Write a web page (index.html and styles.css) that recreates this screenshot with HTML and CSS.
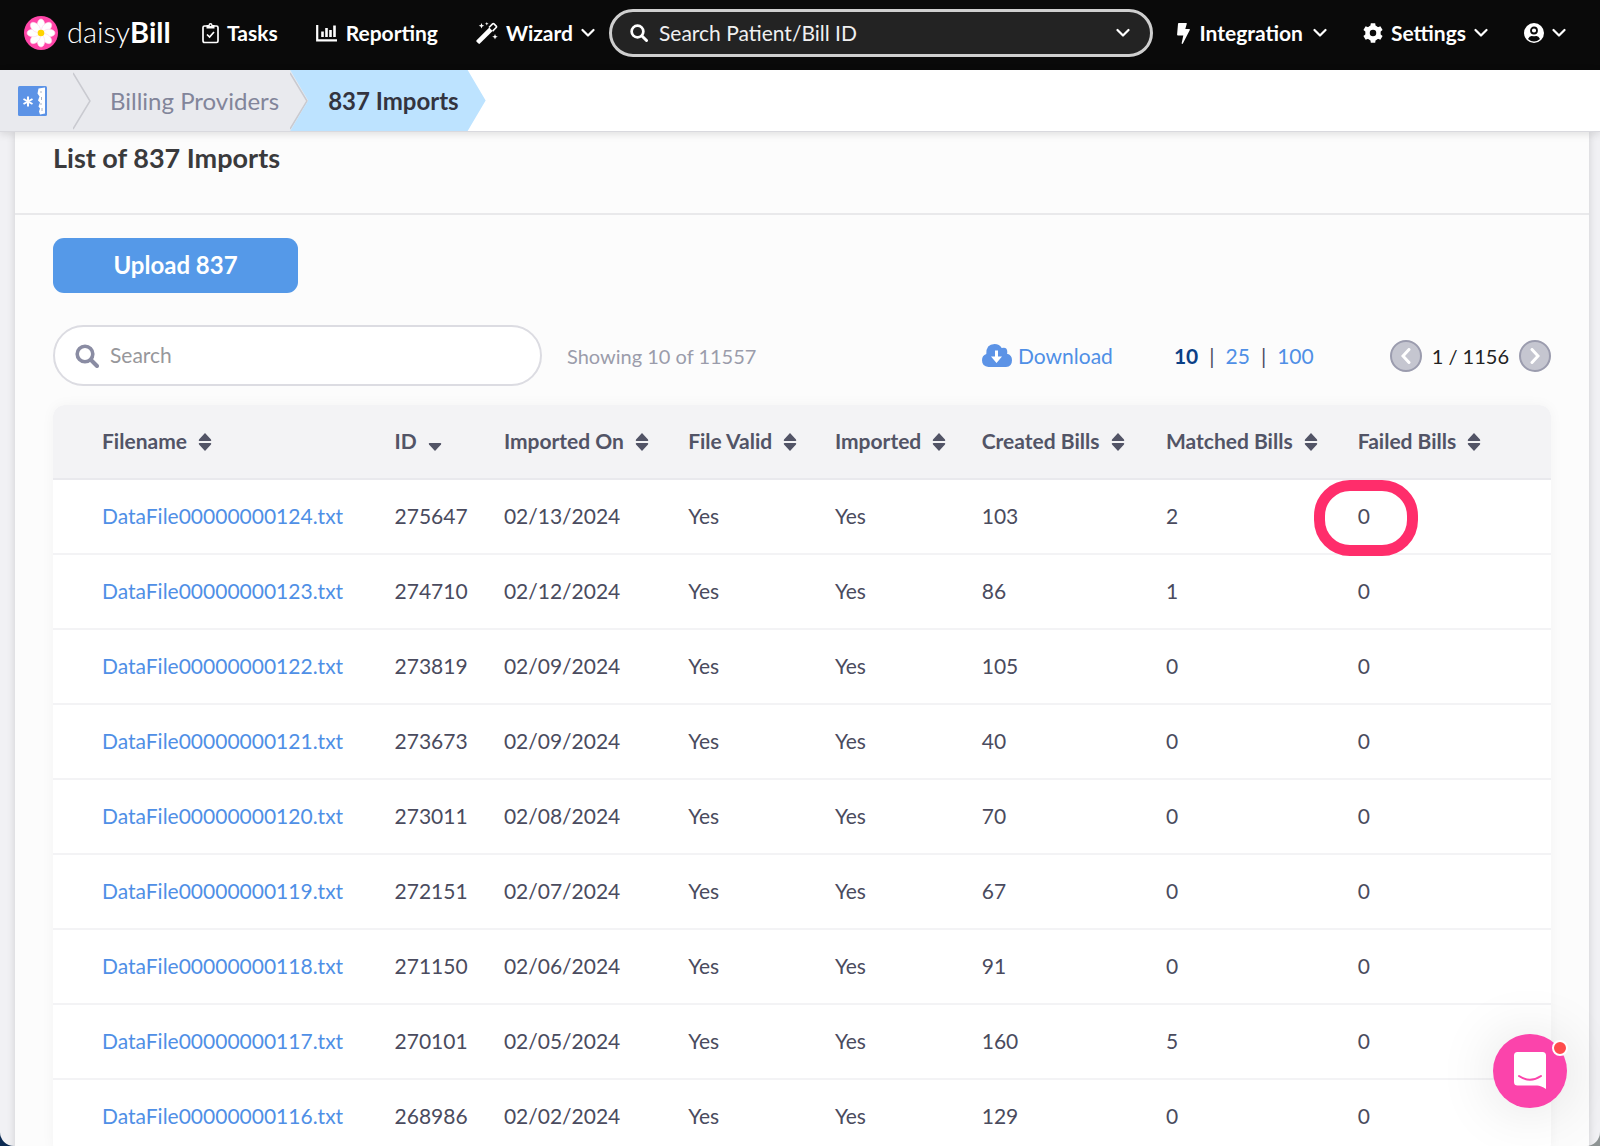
FILE: index.html
```html
<!DOCTYPE html>
<html lang="en">
<head>
    <meta charset="UTF-8">
    <meta name="viewport" content="width=device-width, initial-scale=1.0">
    <title>837 Imports - daisyBill</title>
    <link rel="stylesheet" href="styles.css">
</head>
<body>
    <!-- shared icons -->
    <svg class="icon-defs" aria-hidden="true">
        <symbol id="chevron" viewBox="0 0 14 10"><path d="M1.5 2 7 7.5 12.5 2" fill="none" stroke="currentColor" stroke-width="2.2" stroke-linecap="round" stroke-linejoin="round"/></symbol>
        <symbol id="magnifier" viewBox="0 0 24 24"><circle cx="10" cy="10" r="7.8" fill="none" stroke="currentColor" stroke-width="3.6"/><path d="m16 16 6 6" stroke="currentColor" stroke-width="4" stroke-linecap="round"/></symbol>
        <symbol id="sort" viewBox="0 0 14 18"><path d="M7 0 13 6.4Q13.800 8 12.500 8H1.500Q.2 8 1 6.400ZM7 18 13 11.600Q13.800 10 12.500 10H1.500Q.2 10 1 11.600Z" fill="currentColor"/></symbol>
        <symbol id="sort-down" viewBox="0 0 14 18"><path d="M7 18 13 11.600Q13.800 10 12.500 10H1.500Q.2 10 1 11.600Z" fill="currentColor"/></symbol>
        <symbol id="crumb-arrow" viewBox="0 0 18 62"><path d="M0 3 17 31 0 59" fill="none" stroke="#c9cad0" stroke-width="1.500"/></symbol>
    </svg>

    <div class="app">
        <header class="navbar">
            <a class="brand" href="#">
                <svg class="brand-logo" viewBox="0 0 34 34" aria-hidden="true">
                    <circle cx="17" cy="17" r="17" fill="#ff45a8"/>
                    <g fill="#fff" stroke="#ffd3ea" stroke-width=".6">
                        <ellipse cx="17" cy="9" rx="3.800" ry="6"/>
                        <ellipse cx="17" cy="9" rx="3.800" ry="6" transform="rotate(45 17 17)"/>
                        <ellipse cx="17" cy="9" rx="3.800" ry="6" transform="rotate(90 17 17)"/>
                        <ellipse cx="17" cy="9" rx="3.800" ry="6" transform="rotate(135 17 17)"/>
                        <ellipse cx="17" cy="9" rx="3.800" ry="6" transform="rotate(180 17 17)"/>
                        <ellipse cx="17" cy="9" rx="3.800" ry="6" transform="rotate(225 17 17)"/>
                        <ellipse cx="17" cy="9" rx="3.800" ry="6" transform="rotate(270 17 17)"/>
                        <ellipse cx="17" cy="9" rx="3.800" ry="6" transform="rotate(315 17 17)"/>
                    </g>
                    <circle cx="17" cy="17" r="3.300" fill="#ffd400"/>
                </svg>
                <span class="brand-name">daisy<b>Bill</b></span>
            </a>

            <nav class="nav-links">
                <a class="nav-item" href="#">
                    <svg class="icon-tasks" viewBox="0 0 17 22" aria-hidden="true"><g fill="none" stroke="currentColor" stroke-width="1.700"><path d="M5 4H2.500Q1 4 1 5.500v13Q1 20.500 2.500 20.500h12q1.500 0 1.500-1.500V5.500Q16 4 14.500 4H12"/><path d="m5 12.500 2.600 2.500L12 10"/></g><path d="M4.500 3h2a2 2 0 0 1 4 0h2v3.500h-8Z" fill="currentColor"/><circle cx="8.500" cy="3.300" r=".8" fill="#0a0a0a"/></svg>
                    <span>Tasks</span>
                </a>
                <a class="nav-item" href="#">
                    <svg class="icon-chart" viewBox="0 0 22 18" aria-hidden="true"><g fill="none" stroke="currentColor"><path d="M1.200 1v15.300H21" stroke-width="2.200"/><path d="M6.500 7.500V13M10.500 4v9M14.500 6v7M18.500 1.500V13" stroke-width="2.600"/></g></svg>
                    <span>Reporting</span>
                </a>
                <a class="nav-item nav-wizard" href="#">
                    <svg class="icon-wand" viewBox="0 0 22 22" aria-hidden="true"><path d="M.6 18.300 13.300 5.600l3.300 3.300L3.900 21.600Q3.200 22.200 2.500 21.600L.6 19.700Q0 19 .6 18.300Z" fill="currentColor"/><path d="m13 5.500 3.600-3.600q.7-.7 1.400 0l2.200 2.200q.7.700 0 1.400L16.600 9.100" fill="none" stroke="currentColor" stroke-width="1.600"/><path d="m5.500 1 .8 2 2 .8-2 .8-.8 2-.8-2-2-.8 2-.8ZM10.800 0l.5 1.300 1.300.5-1.300.5-.5 1.300-.5-1.300L9 1.800l1.300-.5ZM19 12l.8 2 2 .8-2 .8-.8 2-.8-2-2-.8 2-.8Z" fill="currentColor"/></svg>
                    <span>Wizard</span>
                    <svg class="chevron" aria-hidden="true"><use href="#chevron"/></svg>
                </a>
            </nav>

            <div class="global-search">
                <svg class="icon-search-sm" aria-hidden="true"><use href="#magnifier"/></svg>
                <input type="text" placeholder="Search Patient/Bill ID" aria-label="Search Patient/Bill ID">
                <button type="button" aria-label="Search options"><svg class="chevron" aria-hidden="true"><use href="#chevron"/></svg></button>
            </div>

            <nav class="nav-tools">
                <a class="nav-item nav-integration" href="#">
                    <svg class="icon-bolt" viewBox="0 0 13 21" aria-hidden="true"><path d="M1.800 0h7.400q.8 0 .6.800L8.300 6h4q1 0 .5 1L6 20.300q-.4.700-1 .6-.5-.2-.3-.9L6.300 12.500H1q-1 0-.9-.9L1 .8Q1.100 0 1.800 0Z" fill="currentColor"/></svg>
                    <span>Integration</span>
                    <svg class="chevron" aria-hidden="true"><use href="#chevron"/></svg>
                </a>
                <a class="nav-item" href="#">
                    <svg class="icon-round" viewBox="0 0 20 20" aria-hidden="true"><circle cx="10" cy="10" r="5.500" fill="none" stroke="currentColor" stroke-width="4.500"/><g fill="currentColor"><path d="M7.800.2h4.400l.6 4H7.200Z"/><path d="M7.800.2h4.400l.6 4H7.200Z" transform="rotate(60 10 10)"/><path d="M7.800.2h4.400l.6 4H7.200Z" transform="rotate(120 10 10)"/><path d="M7.800.2h4.400l.6 4H7.200Z" transform="rotate(180 10 10)"/><path d="M7.800.2h4.400l.6 4H7.200Z" transform="rotate(240 10 10)"/><path d="M7.800.2h4.400l.6 4H7.200Z" transform="rotate(300 10 10)"/></g></svg>
                    <span>Settings</span>
                    <svg class="chevron" aria-hidden="true"><use href="#chevron"/></svg>
                </a>
                <a class="nav-item" href="#" aria-label="Account">
                    <svg class="icon-round" viewBox="0 0 20 20" aria-hidden="true"><circle cx="10" cy="10" r="10" fill="currentColor"/><circle cx="10" cy="7.500" r="3" fill="none" stroke="#0a0a0a" stroke-width="1.800"/><path d="M4 16q1.500-3.300 4-3 2 .7 4 0 2.500-.3 4 3Q13 18.500 10 18.500T4 16Z" fill="#0a0a0a"/></svg>
                    <svg class="chevron" aria-hidden="true"><use href="#chevron"/></svg>
                </a>
            </nav>
        </header>

        <nav class="breadcrumbs" aria-label="Breadcrumb">
            <a class="crumb crumb-home" href="#" aria-label="Home">
                <svg class="icon-book" viewBox="0 0 29 30" aria-hidden="true"><rect width="29" height="30" rx="1.500" fill="#5c93e6"/><path d="M20.500 2.500 27 1.500v26l-5 1-1-3 1-3-1.500-2 1.500-4-2-2 1.500-4-2-3Z" fill="#fff"/><path d="M22 6h2M23.500 11v3M22 18h2M24 22v3" stroke="#aab2c4"/><path d="M10 10.500v10M5.500 13l9 5M14.500 13l-9 5" stroke="#fff" stroke-width="2"/></svg>
                <svg class="crumb-arrow" aria-hidden="true"><use href="#crumb-arrow"/></svg>
            </a>
            <a class="crumb" href="#">
                <span>Billing Providers</span>
                <svg class="crumb-arrow" aria-hidden="true"><use href="#crumb-arrow"/></svg>
            </a>
            <a class="crumb crumb-active" href="#" aria-current="page">837 Imports</a>
        </nav>

        <main class="content">
            <section class="panel">
                <h1 class="panel-title">List of 837 Imports</h1>
                <div class="panel-body">
                    <button type="button" class="btn-upload">Upload 837</button>

                    <div class="toolbar">
                        <div class="table-search">
                            <svg class="icon-search" aria-hidden="true"><use href="#magnifier"/></svg>
                            <input type="text" placeholder="Search" aria-label="Search imports">
                        </div>
                        <span class="showing">Showing 10 of 11557</span>
                        <a class="download" href="#">
                            <svg class="icon-cloud" viewBox="0 0 30 23" aria-hidden="true"><path d="M6.500 23Q0 22.500 0 16.300q0-5 4.300-6.300Q4 0 12.500 0q5 0 7.200 4 5.600-1.500 5.600 4 0 1-.3 1.800 5 1.200 5 6.400 0 6.300-6 6.800Z" fill="#5c93e6"/><path d="M13 6.500h3v6h4L14.500 19 9 12.500h4Z" fill="#fff"/></svg>
                            <span>Download</span>
                        </a>
                        <div class="page-sizes">
                            <a class="current" href="#">10</a>
                            <span>|</span>
                            <a href="#">25</a>
                            <span>|</span>
                            <a href="#">100</a>
                        </div>
                        <div class="pager">
                            <button type="button" aria-label="Previous page"><svg viewBox="0 0 10 16" aria-hidden="true"><path d="M8 1.500 2 8l6 6.500"/></svg></button>
                            <span>1 / 1156</span>
                            <button type="button" aria-label="Next page"><svg viewBox="0 0 10 16" aria-hidden="true"><path d="m2 1.500 6 6.500-6 6.500"/></svg></button>
                        </div>
                    </div>

                    <table class="imports">
                        <colgroup>
                            <col class="col-file"><col class="col-id"><col class="col-date"><col class="col-flag"><col class="col-flag"><col class="col-created"><col class="col-matched"><col class="col-failed">
                        </colgroup>
                        <thead>
                            <tr>
                                <th>Filename <svg class="sort"><use href="#sort"/></svg></th>
                                <th>ID <svg class="sort"><use href="#sort-down"/></svg></th>
                                <th>Imported On <svg class="sort"><use href="#sort"/></svg></th>
                                <th>File Valid <svg class="sort"><use href="#sort"/></svg></th>
                                <th>Imported <svg class="sort"><use href="#sort"/></svg></th>
                                <th>Created Bills <svg class="sort"><use href="#sort"/></svg></th>
                                <th>Matched Bills <svg class="sort"><use href="#sort"/></svg></th>
                                <th>Failed Bills <svg class="sort"><use href="#sort"/></svg></th>
                            </tr>
                        </thead>
                        <tbody>
                            <tr><td><a href="#">DataFile00000000124.txt</a></td><td>275647</td><td>02/13/2024</td><td>Yes</td><td>Yes</td><td>103</td><td>2</td><td class="marked">0</td></tr>
                            <tr><td><a href="#">DataFile00000000123.txt</a></td><td>274710</td><td>02/12/2024</td><td>Yes</td><td>Yes</td><td>86</td><td>1</td><td>0</td></tr>
                            <tr><td><a href="#">DataFile00000000122.txt</a></td><td>273819</td><td>02/09/2024</td><td>Yes</td><td>Yes</td><td>105</td><td>0</td><td>0</td></tr>
                            <tr><td><a href="#">DataFile00000000121.txt</a></td><td>273673</td><td>02/09/2024</td><td>Yes</td><td>Yes</td><td>40</td><td>0</td><td>0</td></tr>
                            <tr><td><a href="#">DataFile00000000120.txt</a></td><td>273011</td><td>02/08/2024</td><td>Yes</td><td>Yes</td><td>70</td><td>0</td><td>0</td></tr>
                            <tr><td><a href="#">DataFile00000000119.txt</a></td><td>272151</td><td>02/07/2024</td><td>Yes</td><td>Yes</td><td>67</td><td>0</td><td>0</td></tr>
                            <tr><td><a href="#">DataFile00000000118.txt</a></td><td>271150</td><td>02/06/2024</td><td>Yes</td><td>Yes</td><td>91</td><td>0</td><td>0</td></tr>
                            <tr><td><a href="#">DataFile00000000117.txt</a></td><td>270101</td><td>02/05/2024</td><td>Yes</td><td>Yes</td><td>160</td><td>5</td><td>0</td></tr>
                            <tr><td><a href="#">DataFile00000000116.txt</a></td><td>268986</td><td>02/02/2024</td><td>Yes</td><td>Yes</td><td>129</td><td>0</td><td>0</td></tr>
                        </tbody>
                    </table>
                </div>
            </section>
        </main>

        <button type="button" class="chat" aria-label="Open chat">
            <svg viewBox="0 0 34 38" aria-hidden="true"><path d="M4.500 0h25Q33 0 33 3.500V37q-5-3.500-9-3.500H4.500Q1 33.500 1 30V3.500Q1 0 4.500 0Z" fill="#fff"/><path d="M6 24q11 7.500 22 0" fill="none" stroke="#fb44ab" stroke-width="2" stroke-linecap="round"/></svg>
            <span class="chat-dot"></span>
        </button>
    </div>
</body>
</html>
```

FILE: styles.css
```css
*,
*::after {
    margin: 0;
    padding: 0;
    box-sizing: border-box;
}

html {
    background: linear-gradient(90deg, #0b2a52 50%, #8e9494 50%);
}

body {
    font-family: Lato, "Open Sans", sans-serif;
    font-size: 21px;
    color: #4a4b5e;
}

a {
    color: #4f8fe6;
    text-decoration: none;
}

button {
    border: none;
    font-family: inherit;
    cursor: pointer;
}

input {
    border: none;
    outline: none;
    background: none;
    font-family: inherit;
    font-size: 21px;
    padding-bottom: 2px;
    min-width: 0;
    flex: 1;
}

svg {
    flex-shrink: 0;
}

.icon-defs {
    display: none;
}

.app {
    position: relative;
    display: flex;
    flex-direction: column;
    height: 100vh;
    overflow: hidden;
    background: #f1f1f4;
    border-radius: 0 0 14px 14px;
}

/* top bar */
.navbar {
    display: flex;
    align-items: center;
    flex-shrink: 0;
    height: 70px;
    padding: 0 34px 4px 24px;
    background: #0a0a0a;
    color: #fff;
}

.brand {
    display: flex;
    align-items: center;
    gap: 9px;
    width: 178px;
    color: #fff;
}

.brand-logo {
    width: 34px;
    height: 34px;
}

.brand-name {
    padding-bottom: 4px;
    font-size: 29px;
    font-weight: 300;
}

.brand-name b {
    font-weight: 700;
}

.nav-links,
.nav-tools {
    display: flex;
    align-items: center;
    gap: 36px;
}

.nav-links {
    gap: 38px;
}

.nav-item {
    display: flex;
    align-items: center;
    gap: 8px;
    color: #fff;
    font-weight: 700;
}

.nav-item span {
    padding-bottom: 2px;
}

.nav-integration {
    gap: 10px;
}

.chevron {
    width: 14px;
    height: 10px;
}

.icon-tasks {
    width: 17px;
    height: 22px;
}

.icon-chart {
    width: 22px;
    height: 18px;
}

.icon-wand {
    width: 22px;
    height: 22px;
}

.icon-bolt {
    width: 13px;
    height: 21px;
}

.icon-round {
    width: 20px;
    height: 20px;
}

.icon-search-sm {
    width: 18px;
    height: 18px;
}

.global-search {
    display: flex;
    align-items: center;
    flex: 1;
    gap: 11px;
    height: 48px;
    margin: 0 24px 0 14px;
    padding: 0 20px 0 18px;
    background: #232323;
    border: 3px solid #cfcfcf;
    border-radius: 24px;
}

.global-search input {
    color: #fff;
}

.global-search input::placeholder {
    color: #f0f0f0;
    opacity: 1;
}

.global-search button {
    display: flex;
    background: none;
    color: #fff;
}

/* breadcrumbs */
.breadcrumbs {
    position: relative;
    z-index: 1;
    display: flex;
    flex-shrink: 0;
    height: 62px;
    background: #fff;
    border-bottom: 1px solid #d9d9de;
    box-shadow: 0 2px 8px rgba(0, 0, 0, 0.12);
}

.crumb {
    display: flex;
    align-items: center;
    gap: 11px;
    padding-left: 19px;
    background: #e9eaee;
    color: #82859a;
    font-size: 24px;
}

.crumb-home {
    gap: 26px;
    padding-left: 18px;
}

.icon-book {
    width: 29px;
    height: 30px;
}

.crumb-arrow {
    width: 18px;
    height: 62px;
}

.crumb-active {
    margin-left: -18px;
    padding: 0 27px 0 38px;
    background: #bde3ff;
    color: #33343f;
    font-weight: 700;
    clip-path: polygon(0 0, calc(100% - 18px) 0, 100% 50%, calc(100% - 18px) 100%, 0 100%, 18px 50%);
}

/* main panel */
.content {
    flex: 1;
    padding: 0 11px 0 15px;
}

.panel {
    min-height: 100%;
    background: #fcfcfc;
    box-shadow: 0 0 8px rgba(0, 0, 0, 0.14);
}

.panel-title {
    height: 83px;
    padding: 10px 38px;
    border-bottom: 2px solid #e9e9eb;
    color: #3a3a3c;
    font-size: 27px;
    line-height: 32px;
}

.panel-body {
    padding: 23px 38px;
}

.btn-upload {
    display: block;
    width: 245px;
    height: 55px;
    padding-bottom: 2px;
    background: #5599e8;
    border-radius: 11px;
    color: #fff;
    font-size: 24px;
    font-weight: 700;
}

.toolbar {
    display: flex;
    align-items: center;
    height: 61px;
    margin: 32px 0 19px;
}

.table-search {
    display: flex;
    align-items: center;
    gap: 11px;
    width: 489px;
    height: 61px;
    padding: 0 20px;
    background: #fff;
    border: 2px solid #dcdce2;
    border-radius: 31px;
}

.table-search input::placeholder {
    color: #97979b;
    opacity: 1;
}

.icon-search {
    width: 24px;
    height: 24px;
    color: #8a8ca3;
}

.showing {
    margin-left: 25px;
    color: #9b9cab;
    font-size: 20px;
}

.download {
    display: flex;
    align-items: center;
    gap: 6px;
    margin-left: auto;
}

.icon-cloud {
    width: 30px;
    height: 23px;
}

.page-sizes {
    display: flex;
    gap: 11px;
    margin: 0 76px 0 61px;
}

.page-sizes .current {
    color: #0b3f86;
    font-weight: 700;
}

.pager {
    display: flex;
    align-items: center;
    gap: 10px;
    color: #222;
    font-size: 20px;
}

.pager button {
    display: flex;
    align-items: center;
    justify-content: center;
    width: 32px;
    height: 32px;
    background: #c5c6d0;
    border: 2px solid #9b9cae;
    border-radius: 50%;
}

.pager svg {
    width: 10px;
    height: 16px;
    fill: none;
    stroke: #fff;
    stroke-width: 3;
    stroke-linecap: round;
}

/* imports table */
.imports {
    width: 100%;
    table-layout: fixed;
    border-collapse: separate;
    border-spacing: 0;
    background: #fff;
    border-radius: 12px;
    box-shadow: 0 0 14px rgba(0, 0, 0, 0.04);
}

.col-file { width: 22.8%; }
.col-id { width: 7.3%; }
.col-date { width: 12.3%; }
.col-flag { width: 9.8%; }
.col-created { width: 12.3%; }
.col-matched { width: 12.8%; }

.imports th,
.imports td {
    height: 75px;
    padding-bottom: 3px;
    text-align: left;
    white-space: nowrap;
    border-bottom: 2px solid #f3f3f5;
}

.imports th {
    background: #f3f3f5;
    border-bottom-color: #e9e9ed;
    color: #525466;
    font-weight: 700;
}

.imports th:first-child,
.imports td:first-child {
    padding-left: 49px;
}

.imports th:first-child {
    border-top-left-radius: 12px;
}

.imports th:last-child {
    border-top-right-radius: 12px;
}

.sort {
    width: 14px;
    height: 18px;
    margin-left: 6px;
    vertical-align: -2px;
}

.marked {
    position: relative;
}

.marked::after {
    content: "";
    position: absolute;
    top: 0;
    left: -44px;
    width: 104px;
    height: 76px;
    border: 11px solid #ff2d6b;
    border-radius: 36px;
}

/* chat launcher */
.chat {
    position: absolute;
    right: 33px;
    bottom: 38px;
    display: flex;
    align-items: center;
    justify-content: center;
    width: 74px;
    height: 74px;
    background: #fb44ab;
    border-radius: 50%;
    box-shadow: 0 2px 60px rgba(0, 0, 0, 0.12);
}

.chat svg {
    width: 34px;
    height: 38px;
}

.chat-dot {
    position: absolute;
    top: 6px;
    right: -1px;
    width: 16px;
    height: 16px;
    background: #ff4c4c;
    border: 2px solid #fff;
    border-radius: 50%;
}
```
